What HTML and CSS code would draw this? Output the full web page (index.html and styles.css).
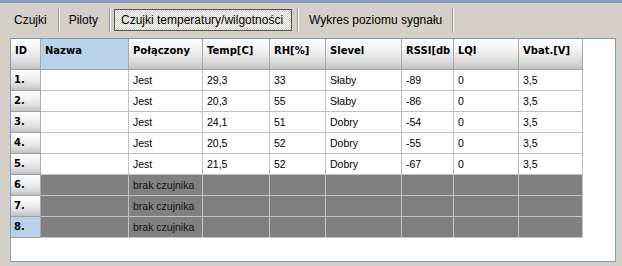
FILE: index.html
```html
<!DOCTYPE html>
<html lang="pl">
<head>
<meta charset="utf-8">
<title>Czujki temperatury/wilgotności</title>
<link rel="stylesheet" href="styles.css">
</head>
<body>
<div class="topstrip"></div>
<div class="tabs">
  <div class="tab">Czujki</div><div class="sep"></div>
  <div class="tab tab-b">Piloty</div><div class="sep"></div>
  <div class="tab active">Czujki temperatury/wilgotności</div><div class="sep sep-c"></div>
  <div class="tab tab-d">Wykres poziomu sygnału</div><div class="sep"></div>
</div>
<div class="panel">
  <div class="grid">
    <div class="hd">ID</div><div class="hd sel">Nazwa</div><div class="hd">Połączony</div><div class="hd">Temp[C]</div><div class="hd">RH[%]</div><div class="hd">Slevel</div><div class="hd">RSSI[db</div><div class="hd">LQI</div><div class="hd">Vbat.[V]</div>

    <div class="id">1.</div><div class="c"></div><div class="c">Jest</div><div class="c">29,3</div><div class="c">33</div><div class="c">Słaby</div><div class="c">-89</div><div class="c">0</div><div class="c">3,5</div>
    <div class="id">2.</div><div class="c"></div><div class="c">Jest</div><div class="c">20,3</div><div class="c">55</div><div class="c">Słaby</div><div class="c">-86</div><div class="c">0</div><div class="c">3,5</div>
    <div class="id">3.</div><div class="c"></div><div class="c">Jest</div><div class="c">24,1</div><div class="c">51</div><div class="c">Dobry</div><div class="c">-54</div><div class="c">0</div><div class="c">3,5</div>
    <div class="id">4.</div><div class="c"></div><div class="c">Jest</div><div class="c">20,5</div><div class="c">52</div><div class="c">Dobry</div><div class="c">-55</div><div class="c">0</div><div class="c">3,5</div>
    <div class="id">5.</div><div class="c"></div><div class="c">Jest</div><div class="c">21,5</div><div class="c">52</div><div class="c">Dobry</div><div class="c">-67</div><div class="c">0</div><div class="c">3,5</div>

    <div class="id">6.</div><div class="c off"></div><div class="c off">brak czujnika</div><div class="c off"></div><div class="c off"></div><div class="c off"></div><div class="c off"></div><div class="c off"></div><div class="c off"></div>
    <div class="id">7.</div><div class="c off"></div><div class="c off">brak czujnika</div><div class="c off"></div><div class="c off"></div><div class="c off"></div><div class="c off"></div><div class="c off"></div><div class="c off"></div>
    <div class="id sel">8.</div><div class="c off"></div><div class="c off">brak czujnika</div><div class="c off"></div><div class="c off"></div><div class="c off"></div><div class="c off"></div><div class="c off"></div><div class="c off"></div>
  </div>
</div>
</body>
</html>
```
FILE: styles.css
```css
html, body {
  margin: 0;
  padding: 0;
}
body {
  width: 622px;
  height: 266px;
  overflow: hidden;
  background: #d4d0c8;
  font-family: "Liberation Sans", Arial, sans-serif;
  color: #000;
}
.topstrip {
  height: 3px;
  background: #8b9ab6;
}
.tabs {
  display: flex;
  align-items: center;
  height: 22px;
  margin-top: 6px;
  padding-left: 3px;
  font-size: 12px;
}
.tab {
  padding: 0 11px;
  line-height: 22px;
  white-space: nowrap;
}
.tab-b {
  padding-left: 10px;
}
.tab-d {
  padding-right: 10px;
}
.tab.active {
  margin-left: 4px;
  margin-right: 5px;
  padding: 0 6px;
  line-height: 20px;
  border: 1px solid #555;
  box-sizing: border-box;
  width: 178px;
  background: repeating-conic-gradient(#ffffff 0 25%, #d4d0c8 0 50%) 0 0 / 2px 2px;
}
.sep {
  width: 1px;
  height: 24px;
  background: #9a9890;
  box-shadow: 1px 0 0 #fff;
}
.panel {
  margin: 7px 0 0 10px;
  width: 606px;
  height: 224px;
  box-sizing: border-box;
  border: 1px solid #7f9db9;
  background: #fff;
}
.grid {
  display: grid;
  grid-template-columns: 30px 88px 74px 67px 56px 76px 52px 65px 64px;
  grid-template-rows: 31px repeat(8, 21px);
  width: 572px;
}
.grid > div {
  box-sizing: border-box;
  overflow: hidden;
  white-space: nowrap;
}
.hd {
  border-right: 1px solid #a9a9a9;
  border-bottom: 1px solid #a0a0a0;
  background: linear-gradient(#ffffff, #f3f3f3 35%, #dcdcdc 75%, #c2c2c2);
  font-family: "DejaVu Sans", Verdana, sans-serif;
  font-weight: bold;
  font-size: 10px;
  line-height: 12px;
  padding: 6px 0 0 4px;
}
.hd.sel {
  background: #b9d1ea;
}
.id {
  border-right: 1px solid #a9a9a9;
  border-bottom: 1px solid #a0a0a0;
  background: linear-gradient(#ffffff, #f3f3f3 35%, #dcdcdc 75%, #c2c2c2);
  font-family: "DejaVu Sans", Verdana, sans-serif;
  font-weight: bold;
  font-size: 10px;
  line-height: 20px;
  padding-left: 3px;
}
.id.sel {
  background: #b9d1ea;
}
.c {
  border-right: 1px solid #c0c0c0;
  border-bottom: 1px solid #c0c0c0;
  font-size: 10.5px;
  line-height: 20px;
  padding-left: 4px;
}
.c.off {
  background: #808080;
  border-color: #c4c4c4;
  color: #141414;
}
```
